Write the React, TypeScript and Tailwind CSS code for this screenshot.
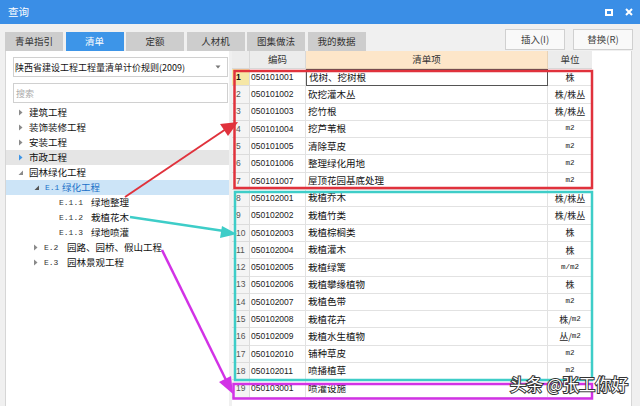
import React from "react";

const rows: [string, string, string][] = [
  ["050101001", "伐树、挖树根", "株"],
  ["050101002", "砍挖灌木丛", "株/株丛"],
  ["050101003", "挖竹根", "株/株丛"],
  ["050101004", "挖芦苇根", "m2"],
  ["050101005", "清除草皮", "m2"],
  ["050101006", "整理绿化用地", "m2"],
  ["050101007", "屋顶花园基底处理", "m2"],
  ["050102001", "栽植乔木", "株/株丛"],
  ["050102002", "栽植竹类", "株/株丛"],
  ["050102003", "栽植棕榈类", "株"],
  ["050102004", "栽植灌木", "株"],
  ["050102005", "栽植绿篱", "m/m2"],
  ["050102006", "栽植攀缘植物", "株"],
  ["050102007", "栽植色带", "m2"],
  ["050102008", "栽植花卉", "株/m2"],
  ["050102009", "栽植水生植物", "丛/m2"],
  ["050102010", "铺种草皮", "m2"],
  ["050102011", "喷播植草", "m2"],
  ["050103001", "喷灌设施", ""],
];

const tabs = ["青单指引", "清单", "定额", "人材机", "图集做法", "我的数据"];

function Tri({ open, color = "#8a8a8a" }: { open?: boolean; color?: string }) {
  return open ? (
    <svg width="7" height="7" viewBox="0 0 7 7" className="shrink-0">
      <polygon points="6,1.5 6,6 1.5,6" fill={color} />
    </svg>
  ) : (
    <svg width="7" height="7" viewBox="0 0 7 7" className="shrink-0">
      <polygon points="2,0.5 5.5,3.5 2,6.5" fill={color} />
    </svg>
  );
}

const mono = "font-['Liberation_Mono','DejaVu_Sans_Mono',monospace]";
const arial = "font-['Liberation_Sans',Arial,sans-serif]";

export default function App() {
  const font = "font-['Noto_Sans_CJK_SC','Microsoft_YaHei',sans-serif]";
  return (
    <div className={`relative w-[640px] h-[406px] overflow-hidden bg-[#f0f0f0] ${font} text-[#222] leading-none`}>
      {/* title bar */}
      <div className="h-[24px] bg-[#3a8ee6] flex items-center justify-between pl-[8px] pr-[7px]">
        <span className="text-white text-[10.5px]">查询</span>
        <div className="flex items-center gap-[12px]">
          <div className="w-[8px] h-[7px] border-[2px] border-white" />
          <svg width="8" height="8" viewBox="0 0 8 8">
            <path d="M1 1 L7 7 M7 1 L1 7" stroke="white" strokeWidth="2" />
          </svg>
        </div>
      </div>
      {/* tab row */}
      <div className="flex items-end justify-between h-[27px] pl-[5px] pr-[7px]">
        <div className="flex gap-[2.5px] h-[19px]">
          {tabs.map((t, i) => (
            <div
              key={t}
              className={`w-[58px] flex items-center justify-center text-[9.5px] ${
                i === 1 ? "bg-[#3d95e8] text-white" : "bg-[#cdcdcd] text-[#333]"
              }`}
            >
              {t}
            </div>
          ))}
        </div>
        <div className="flex gap-[8px] mb-[1px]">
          <div className="w-[60px] h-[21px] bg-[#f9f9f9] border border-[#d0d0d0] flex items-center justify-center text-[9.5px] text-[#444]">
            插入(I)
          </div>
          <div className="w-[60px] h-[21px] bg-[#f9f9f9] border border-[#d0d0d0] flex items-center justify-center text-[9.5px] text-[#444]">
            替换(R)
          </div>
        </div>
      </div>
      {/* body */}
      <div className="flex h-[355px] pl-[5px] gap-[3px]">
        {/* left panel */}
        <div className="w-[224px] bg-white border-l border-[#d6d6d6] flex flex-col pt-[6px]">
          <div className="ml-[7px] mr-[1px] h-[20px] border border-[#d0d0d0] flex items-center justify-between pl-[1px] pr-[6px]">
            <span className="text-[9px] whitespace-nowrap text-[#111]">陕西省建设工程工程量清单计价规则(2009)</span>
            <svg width="6" height="4" viewBox="0 0 6 4">
              <polygon points="0.5,0.5 5.5,0.5 3,3.5" fill="#777" />
            </svg>
          </div>
          <div className="ml-[7px] mr-[1px] mt-[6px] h-[20px] border border-[#d0d0d0] flex items-center pl-[2px]">
            <span className="text-[9px] text-[#aaa]">搜索</span>
          </div>
          <div className="mt-[2px] flex flex-col text-[9.5px] text-[#111]">
            {[
              ["建筑工程", false],
              ["装饰装修工程", false],
              ["安装工程", false],
              ["市政工程", true],
            ].map(([t, hl]) => (
              <div
                key={t as string}
                className={`h-[15px] flex items-center pl-[11px] gap-[5px] ${hl ? "bg-[#e5e5e5]" : ""}`}
              >
                <Tri color={hl ? "#3d95e8" : "#8a8a8a"} />
                <span>{t}</span>
              </div>
            ))}
            <div className="h-[15px] flex items-center pl-[11px] gap-[5px]">
              <Tri open />
              <span>园林绿化工程</span>
            </div>
            <div className="h-[15px] flex items-center pl-[27px] bg-[#cce4f7]">
              <Tri open color="#555" />
              <span className={`ml-[5px] w-[17px] text-[8px] text-[#1a70c8] ${mono}`}>E.1</span>
              <span className="text-[#1a70c8]">绿化工程</span>
            </div>
            {[
              ["E.1.1", "绿地整理"],
              ["E.1.2", "栽植花木"],
              ["E.1.3", "绿地喷灌"],
            ].map(([c, t]) => (
              <div key={c} className="h-[15px] flex items-center pl-[53px]">
                <span className={`w-[32px] text-[8px] text-[#333] ${mono}`}>{c}</span>
                <span>{t}</span>
              </div>
            ))}
            {[
              ["E.2", "园路、园桥、假山工程"],
              ["E.3", "园林景观工程"],
            ].map(([c, t]) => (
              <div key={c} className="h-[15px] flex items-center pl-[26px]">
                <Tri />
                <span className={`ml-[5px] w-[23px] text-[8px] text-[#333] ${mono}`}>{c}</span>
                <span>{t}</span>
              </div>
            ))}
          </div>
        </div>
        {/* table */}
        <div className="w-[400px] bg-white border-r border-[#d6d6d6] flex flex-col">
          <div className="flex h-[18px] text-[9.5px] text-[#333]">
            <div className="w-[18px] bg-[#ececec] border-r border-b border-[#d8d8d8]" />
            <div className="w-[56px] bg-[#ececec] border-r border-b border-[#d8d8d8] flex items-center justify-center">编码</div>
            <div className="w-[242px] bg-[#fde6c9] border-r border-b border-[#e8d2b6] flex items-center justify-center">清单项</div>
            <div className="w-[44px] bg-[#ececec] border-b border-[#d8d8d8] flex items-center justify-center">单位</div>
          </div>
          {rows.map(([code, name, unit], i) => (
            <div key={code} className="flex h-[17.3px]">
              <div
                className={`w-[18px] border-r border-b border-[#dcdcdc] flex items-center pl-[4px] text-[8.5px] ${arial} ${
                  i === 0 ? "bg-[#f6e7a6] font-bold text-[#111]" : "bg-[#f4f4f4] text-[#555]"
                }`}
              >
                {i + 1}
              </div>
              <div className={`w-[56px] border-r border-b border-[#e2e2e2] flex items-center pl-[1px] text-[8.5px] text-[#222] ${arial}`}>
                {code}
              </div>
              <div
                className={`w-[242px] flex items-center pl-[2px] text-[9.5px] text-[#111] ${
                  i === 0 ? "border border-[#555]" : "border-r border-b border-[#e2e2e2]"
                }`}
              >
                {name}
              </div>
              <div className="w-[44px] border-b border-[#e2e2e2] flex items-center justify-center text-[9px] text-[#222]">
                {unit.split(/(m\/m2|m2)/).map((p, k) =>
                  /m/.test(p) ? (
                    <span key={k} className={`text-[7.5px] ${mono}`}>{p}</span>
                  ) : (
                    <span key={k}>{p}</span>
                  )
                )}
              </div>
            </div>
          ))}
        </div>
      </div>

      {/* annotations overlay */}
      <svg className="absolute left-0 top-0 pointer-events-none" width="640" height="406" viewBox="0 0 640 406">
        <rect x="234.5" y="71" width="357.5" height="117" fill="none" stroke="#e0323c" strokeWidth="2.5" />
        <rect x="235" y="192" width="357" height="188" fill="none" stroke="#3ecdc8" strokeWidth="2.5" />
        <rect x="233.5" y="384" width="358.5" height="14.5" fill="none" stroke="#d232e6" strokeWidth="2.5" />
        {/* red arrow */}
        <line x1="125" y1="197" x2="226" y2="129" stroke="#e0323c" strokeWidth="2" />
        <polygon points="238,122 220,124 228,136" fill="#e0323c" />
        {/* cyan arrow */}
        <line x1="130" y1="217" x2="224" y2="231" stroke="#3ecdc8" strokeWidth="2.5" />
        <polygon points="237,234 222,226 220,238" fill="#3ecdc8" />
        {/* magenta arrow */}
        <line x1="162" y1="250" x2="226" y2="380" stroke="#d232e6" strokeWidth="2.5" />
        <polygon points="233,394 219,382 231,376" fill="#d232e6" />
        {/* watermark */}
        <text
          x="510"
          y="391"
          fontSize="16.5"
          fontFamily="'Noto Sans CJK SC', sans-serif"
          fill="white"
          stroke="#333"
          strokeWidth="2"
          paintOrder="stroke"
        >
          头条 @张工你好
        </text>
      </svg>
    </div>
  );
}
